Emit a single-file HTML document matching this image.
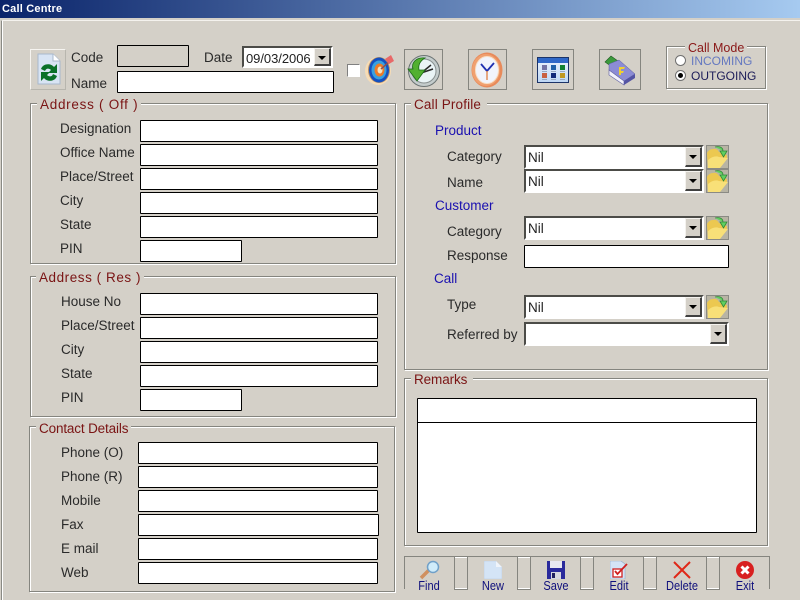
<!DOCTYPE html>
<html><head><meta charset="utf-8"><title>Call Centre</title>
<style>
html,body{margin:0;padding:0;background:#d4d0c8;width:800px;height:600px;overflow:hidden}
body{position:relative;font-family:"Liberation Sans",sans-serif;font-size:13.5px;color:#2a2a2a}
div,span,svg{position:absolute;box-sizing:border-box}
.l{line-height:16px;white-space:nowrap}
.b{color:#1a10b0}
.i{border:1px solid #000;background:#fff;height:22px;border-radius:1px}
.g{border:1px solid #85857f;box-shadow:1px 1px 0 #fff,inset 1px 1px 0 #fff}
.t{color:#7a1414;line-height:16px;background:#d4d0c8;padding:0 3px;white-space:nowrap}
.c{background:#fff;border:2px solid;border-color:#4c4c48 #fff #fff #4c4c48;height:24px}
.c .n{left:2px;top:3px;line-height:16px;color:#222}
.a{right:0;top:0;bottom:0;width:17px;background:#d4d0c8;border:1px solid;border-color:#f4f2ee #404040 #404040 #f4f2ee;border-width:1px 2px 2px 1px}
.a:after{content:"";position:absolute;left:3px;top:7px;border:4px solid transparent;border-top:4px solid #000;border-bottom:0}
.ib{border:1px solid #85857f}
.tl{color:#10107c;line-height:14px;font-size:13px;white-space:nowrap;text-align:center;transform:scaleX(.85)}
</style></head><body>
<div style="left:0;top:0;width:800px;height:18px;background:linear-gradient(90deg,#0a246a,#a6caf0)"></div>
<div style="left:2px;top:3px;color:#fff;font-weight:bold;font-size:11px;line-height:12px;white-space:nowrap;letter-spacing:.2px">Call Centre</div>
<div style="left:1px;top:20px;width:799px;height:580px;border-left:1px solid #8a8a84;border-top:1px solid #f4f2ee;box-shadow:inset 1px 0 0 #fff"></div>

<!-- top row -->
<div style="left:30px;top:49px;width:36px;height:41px;border:1px solid;border-color:#f6f4f0 #b8b6ae #b8b6ae #f6f4f0"></div>
<svg style="left:37px;top:53px" width="24" height="32" viewBox="0 0 24 32"><path d="M1 1H16L23 8V31H1Z" fill="#d8e4f4" stroke="#a8b8cc" stroke-width="1"/><path d="M16 1V8H23" fill="#fff" stroke="#a8b8cc"/><path d="M4 16C6 10 14 10 17 14L20 11V20H11L14 17C12 15 9 15 8 18ZM20 23C18 29 10 29 7 25L4 28V19H13L10 22C12 24 15 24 16 21Z" fill="#0a7028"/></svg>
<div class="l" style="left:71px;top:50px">Code</div>
<div class="l" style="left:71px;top:76px">Name</div>
<div class="i" style="left:117px;top:45px;width:72px;background:#d4d0c8"></div>
<div class="i" style="left:117px;top:71px;width:217px"></div>
<div class="l" style="left:204px;top:50px">Date</div>
<div class="c" style="left:242px;top:46px;width:91px;height:22px"><div class="n" style="left:2px;top:3px;font-size:13px;letter-spacing:-.05px">09/03/2006</div><div class="a"></div></div>
<div style="left:347px;top:64px;width:13px;height:13px;background:#fff;border:1px solid;border-color:#808080 #fff #fff #808080"></div>
<svg style="left:364px;top:54px" width="31" height="32" viewBox="0 0 31 32"><ellipse cx="14" cy="17" rx="13" ry="14" fill="#f6dcb6"/><ellipse cx="15" cy="16" rx="11" ry="13" fill="#b89068"/><ellipse cx="15" cy="16" rx="10" ry="12.500" fill="#1450c0"/><ellipse cx="15" cy="16" rx="7.500" ry="9.500" fill="#38a0e0"/><ellipse cx="15.500" cy="16" rx="5" ry="6.500" fill="#ec7a28"/><ellipse cx="16" cy="16" rx="2.500" ry="3.500" fill="#f4e4c0"/><path d="M17 15L25 8" stroke="#905050" stroke-width="1.500"/><path d="M21 5L27 1L30 7L25 10Z" fill="#e86868"/></svg>

<div class="ib" style="left:404px;top:49px;width:39px;height:41px"></div>
<svg style="left:407px;top:54px" width="34" height="34" viewBox="0 0 34 34"><circle cx="17" cy="17" r="15.500" fill="#c4cccc" stroke="#6c7474"/><circle cx="17" cy="17" r="12" fill="#eaf4f6" stroke="#889090"/><path d="M13 20L24 11M14 19L26 15" stroke="#2a2a2a" stroke-width="1.500"/><path d="M18 4C9 3 4 9 6 15H1L10 27L18 16H12C11 11 13 7 18 4Z" fill="#52b030" stroke="#1c6c18" stroke-width=".8"/></svg>
<div class="ib" style="left:468px;top:49px;width:39px;height:41px"></div>
<svg style="left:471px;top:52px" width="32" height="36" viewBox="0 0 32 36"><ellipse cx="16" cy="18" rx="15.500" ry="17.500" fill="#e88a5a"/><ellipse cx="15" cy="18" rx="14" ry="16" fill="#f0a070"/><ellipse cx="16" cy="18" rx="11.500" ry="13.500" fill="#f2f4fc" stroke="#f8e0c8"/><path d="M16 19L10 12M16 19L23 11" stroke="#2030b0" stroke-width="1.800"/><path d="M16 19V28" stroke="#e08040" stroke-width="1.300"/></svg>
<div class="ib" style="left:532px;top:49px;width:42px;height:41px"></div>
<svg style="left:537px;top:57px" width="32" height="26" viewBox="0 0 32 26"><defs><linearGradient id="cg" x1="0" y1="0" x2="0" y2="1"><stop offset="0" stop-color="#eef4fd"/><stop offset="1" stop-color="#bcd6f4"/></linearGradient></defs><rect x=".5" y=".5" width="31" height="25" fill="url(#cg)" stroke="#1c3468"/><rect x="1" y="1" width="30" height="5" fill="#3068c8"/><rect x="5" y="8" width="5" height="5" fill="#7474a4"/><rect x="14" y="8" width="5" height="5" fill="#2060a8"/><rect x="23" y="8" width="5" height="5" fill="#108030"/><rect x="5" y="16" width="5" height="5" fill="#c86040"/><rect x="14" y="16" width="5" height="5" fill="#102878"/><rect x="23" y="16" width="5" height="5" fill="#c09820"/><path d="M5 14.500H10M14 14.500H19M23 14.500H28M5 22.500H10M14 22.500H19M23 22.500H28" stroke="#98a8c0" stroke-width="1"/></svg>
<div class="ib" style="left:599px;top:49px;width:42px;height:41px"></div>
<svg style="left:604px;top:55px" width="32" height="31" viewBox="0 0 32 31"><path d="M1 7L7 1L14 6L8 12Z" fill="#3c9a3c" stroke="#205820" stroke-width=".6"/><path d="M5 9L15 5L31 19L20 26L5 15Z" fill="#8c8cd4" stroke="#5c5ca0" stroke-width=".5"/><path d="M5 15L20 26V30L5 20Z" fill="#f2f2fa" stroke="#6868a8" stroke-width=".7"/><path d="M20 26L31 19V23L20 30Z" fill="#5454a4"/><path d="M15 12H21L20 14H17V16H20L19 18H17V20H15Z" fill="#f0d030"/></svg>

<div class="g" style="left:666px;top:46px;width:100px;height:43px"></div>
<div class="t" style="left:685px;top:41px;color:#8a1818;font-size:12.5px;line-height:14px">Call Mode</div>
<div style="left:675px;top:55px;width:11px;height:11px;border-radius:50%;background:#fff;border:1px solid #707070"></div>
<div style="left:675px;top:70px;width:11px;height:11px;border-radius:50%;background:#fff;border:1px solid #707070"></div>
<div style="left:678px;top:73px;width:5px;height:5px;border-radius:50%;background:#000"></div>
<div class="l" style="left:691px;top:53px;font-size:12px;color:#6478c0">INCOMING</div>
<div class="l" style="left:691px;top:68px;font-size:12px;color:#1c1c58">OUTGOING</div>

<!-- Address Off -->
<div class="g" style="left:30px;top:103px;width:366px;height:161px"></div>
<div class="t" style="left:37px;top:97px;letter-spacing:.72px">Address ( Off )</div>
<div class="l" style="left:60px;top:121px">Designation</div>
<div class="l" style="left:60px;top:145px">Office Name</div>
<div class="l" style="left:60px;top:169px">Place/Street</div>
<div class="l" style="left:60px;top:193px">City</div>
<div class="l" style="left:60px;top:217px">State</div>
<div class="l" style="left:60px;top:241px">PIN</div>
<div class="i" style="left:140px;top:120px;width:238px"></div>
<div class="i" style="left:140px;top:144px;width:238px"></div>
<div class="i" style="left:140px;top:168px;width:238px"></div>
<div class="i" style="left:140px;top:192px;width:238px"></div>
<div class="i" style="left:140px;top:216px;width:238px"></div>
<div class="i" style="left:140px;top:240px;width:102px"></div>

<!-- Address Res -->
<div class="g" style="left:30px;top:276px;width:366px;height:141px"></div>
<div class="t" style="left:36px;top:270px;letter-spacing:.55px">Address ( Res )</div>
<div class="l" style="left:61px;top:294px">House No</div>
<div class="l" style="left:61px;top:318px">Place/Street</div>
<div class="l" style="left:61px;top:342px">City</div>
<div class="l" style="left:61px;top:366px">State</div>
<div class="l" style="left:61px;top:390px">PIN</div>
<div class="i" style="left:140px;top:293px;width:238px"></div>
<div class="i" style="left:140px;top:317px;width:238px"></div>
<div class="i" style="left:140px;top:341px;width:238px"></div>
<div class="i" style="left:140px;top:365px;width:238px"></div>
<div class="i" style="left:140px;top:389px;width:102px"></div>

<!-- Contact -->
<div class="g" style="left:29px;top:426px;width:366px;height:166px"></div>
<div class="t" style="left:36px;top:421px;letter-spacing:-.15px">Contact Details</div>
<div class="l" style="left:61px;top:445px">Phone (O)</div>
<div class="l" style="left:61px;top:469px">Phone (R)</div>
<div class="l" style="left:61px;top:493px">Mobile</div>
<div class="l" style="left:61px;top:517px">Fax</div>
<div class="l" style="left:61px;top:541px">E mail</div>
<div class="l" style="left:61px;top:565px">Web</div>
<div class="i" style="left:138px;top:442px;width:240px"></div>
<div class="i" style="left:138px;top:466px;width:240px"></div>
<div class="i" style="left:138px;top:490px;width:240px"></div>
<div class="i" style="left:138px;top:514px;width:241px"></div>
<div class="i" style="left:138px;top:538px;width:240px"></div>
<div class="i" style="left:138px;top:562px;width:240px"></div>

<!-- Call Profile -->
<div class="g" style="left:404px;top:103px;width:364px;height:267px"></div>
<div class="t" style="left:411px;top:97px;padding-right:6px;letter-spacing:.15px">Call Profile</div>
<div class="l b" style="left:435px;top:123px">Product</div>
<div class="l" style="left:447px;top:149px">Category</div>
<div class="l" style="left:447px;top:175px">Name</div>
<div class="l b" style="left:435px;top:198px">Customer</div>
<div class="l" style="left:447px;top:224px">Category</div>
<div class="l" style="left:447px;top:248px">Response</div>
<div class="l b" style="left:434px;top:271px">Call</div>
<div class="l" style="left:447px;top:297px">Type</div>
<div class="l" style="left:447px;top:327px">Referred by</div>

<div class="c" style="left:524px;top:145px;width:180px"><div class="n">Nil</div><div class="a"></div></div>
<div class="c" style="left:524px;top:169px;width:180px"><div class="n">Nil</div><div class="a"></div></div>
<div class="c" style="left:524px;top:216px;width:180px"><div class="n">Nil</div><div class="a"></div></div>
<div class="i" style="left:524px;top:245px;width:205px;height:23px"></div>
<div class="c" style="left:524px;top:295px;width:180px"><div class="n">Nil</div><div class="a"></div></div>
<div class="c" style="left:524px;top:322px;width:205px"><div class="a"></div></div>

<svg style="left:706px;top:145px" width="23" height="24" viewBox="0 0 23 24"><rect x=".5" y=".5" width="22" height="23" fill="#b8b4a4" stroke="#8a8a84"/><path d="M1 8Q3 4 7 4Q11 3 13 7L21 10V14L13 23H2Z" fill="#ecc850"/><path d="M2 15Q8 10 13 12L22 13L14 23H2Z" fill="#f8e078"/><path d="M9 2C13 1 17 2 17 6M14 6H21L17.500 12Z" fill="#60d060" stroke="#308838" stroke-width=".8"/></svg>
<svg style="left:706px;top:169px" width="23" height="24" viewBox="0 0 23 24"><rect x=".5" y=".5" width="22" height="23" fill="#b8b4a4" stroke="#8a8a84"/><path d="M1 8Q3 4 7 4Q11 3 13 7L21 10V14L13 23H2Z" fill="#ecc850"/><path d="M2 15Q8 10 13 12L22 13L14 23H2Z" fill="#f8e078"/><path d="M9 2C13 1 17 2 17 6M14 6H21L17.500 12Z" fill="#60d060" stroke="#308838" stroke-width=".8"/></svg>
<svg style="left:706px;top:216px" width="23" height="24" viewBox="0 0 23 24"><rect x=".5" y=".5" width="22" height="23" fill="#b8b4a4" stroke="#8a8a84"/><path d="M1 8Q3 4 7 4Q11 3 13 7L21 10V14L13 23H2Z" fill="#ecc850"/><path d="M2 15Q8 10 13 12L22 13L14 23H2Z" fill="#f8e078"/><path d="M9 2C13 1 17 2 17 6M14 6H21L17.500 12Z" fill="#60d060" stroke="#308838" stroke-width=".8"/></svg>
<svg style="left:706px;top:295px" width="23" height="24" viewBox="0 0 23 24"><rect x=".5" y=".5" width="22" height="23" fill="#b8b4a4" stroke="#8a8a84"/><path d="M1 8Q3 4 7 4Q11 3 13 7L21 10V14L13 23H2Z" fill="#ecc850"/><path d="M2 15Q8 10 13 12L22 13L14 23H2Z" fill="#f8e078"/><path d="M9 2C13 1 17 2 17 6M14 6H21L17.500 12Z" fill="#60d060" stroke="#308838" stroke-width=".8"/></svg>

<!-- Remarks -->
<div class="g" style="left:404px;top:378px;width:364px;height:168px"></div>
<div class="t" style="left:411px;top:372px;padding-right:6px;letter-spacing:-.1px">Remarks</div>
<div class="i" style="left:417px;top:398px;width:340px;height:135px"></div>
<div style="left:417px;top:422px;width:340px;height:1px;background:#000"></div>

<!-- Toolbar -->
<svg style="left:400px;top:550px" width="380" height="45" viewBox="0 0 380 45" fill="none"><path d="M4.500 39V6.500H369.500V39" stroke="#85857f"/><path d="M54.500 6.500V39.500H67.500V6.500M117.500 6.500V39.500H130.500V6.500M180.500 6.500V39.500H193.500V6.500M243.500 6.500V39.500H256.500V6.500M306.500 6.500V39.500H319.500V6.500" stroke="#85857f"/><path d="M55 7.500H67M118 7.500H130M181 7.500H193M244 7.500H256M307 7.500H319" stroke="#fff"/><path d="M55 38.500H67M118 38.500H130M181 38.500H193M244 38.500H256M307 38.500H319" stroke="#fff"/></svg>
<svg style="left:419px;top:560px" width="22" height="20" viewBox="0 0 22 20"><path d="M2 18L10 10" stroke="#d09060" stroke-width="3.500"/><circle cx="14" cy="7" r="5.500" fill="#d0ecfa" stroke="#70a0c8" stroke-width="1.500"/></svg>
<svg style="left:484px;top:561px" width="18" height="18" viewBox="0 0 18 18"><path d="M0 0H12L18 6V18H0Z" fill="#d4e4f6" stroke="#b8c8dc" stroke-width=".5"/><path d="M12 0V6H18Z" fill="#f0f4fa"/></svg>
<svg style="left:547px;top:561px" width="18" height="18" viewBox="0 0 18 18"><rect width="18" height="18" fill="#2a2a9c"/><rect x="3" y="0" width="12" height="7" fill="#e8e8f0"/><rect x="4" y="11" width="10" height="7" fill="#d8d8e0"/><rect x="5" y="12" width="3" height="5" fill="#202060"/></svg>
<svg style="left:610px;top:561px" width="19" height="18" viewBox="0 0 19 18"><path d="M0 0H11L15 3V18H0Z" fill="#d4e4f6" stroke="#90a8c8" stroke-width=".6"/><rect x="3" y="8" width="9" height="8" fill="#fff" stroke="#d02020" stroke-width="1.300"/><path d="M5 10L7.500 13L17 3" stroke="#d02020" stroke-width="1.800" fill="none"/></svg>
<svg style="left:672px;top:561px" width="20" height="18" viewBox="0 0 20 18"><path d="M2 1L18 17M18 1L2 17" stroke="#e02818" stroke-width="2"/></svg>
<svg style="left:736px;top:561px" width="18" height="18" viewBox="0 0 18 18"><circle cx="9" cy="9" r="9" fill="#d82020"/><path d="M5.500 5.500L12.500 12.500M12.500 5.500L5.500 12.500" stroke="#fff" stroke-width="3"/></svg>
<div class="tl" style="left:404px;top:579px;width:50px">Find</div>
<div class="tl" style="left:468px;top:579px;width:50px">New</div>
<div class="tl" style="left:531px;top:579px;width:50px">Save</div>
<div class="tl" style="left:594px;top:579px;width:50px">Edit</div>
<div class="tl" style="left:657px;top:579px;width:50px">Delete</div>
<div class="tl" style="left:720px;top:579px;width:50px">Exit</div>
</body></html>
